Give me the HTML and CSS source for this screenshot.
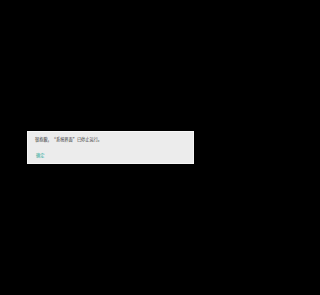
FILE: index.html
```html
<!DOCTYPE html>
<html lang="zh-CN">
<head>
<meta charset="utf-8">
<link rel="stylesheet" href="styles.css">
</head>
<body>
<div class="screen">
  <div class="dialog">
    <p class="message">很抱歉，“系统界面”已停止运行。</p>
    <div class="actions"><span class="button">确定</span></div>
  </div>
</div>
</body>
</html>
```
FILE: styles.css
```css
html, body {
  margin: 0;
  padding: 0;
  background: #000;
}
.screen {
  width: 221px;
  height: 295px;
  background: #000;
  padding-top: 131px;
  padding-left: 27px;
  box-sizing: border-box;
}
.dialog {
  width: 167px;
  height: 33px;
  box-sizing: border-box;
  background: #ececec;
  border: 1px solid #f7f7f7;
  padding: 5px 0 0 7px;
  font-family: "Noto Sans CJK SC", "Noto Sans", sans-serif;
  font-size: 4.2px;
  line-height: 5px;
}
.message {
  margin: 0;
  color: #333;
}
.actions {
  display: flex;
  margin-top: 11px;
  padding-left: 1px;
}
.button {
  color: #2aa99a;
}
```
